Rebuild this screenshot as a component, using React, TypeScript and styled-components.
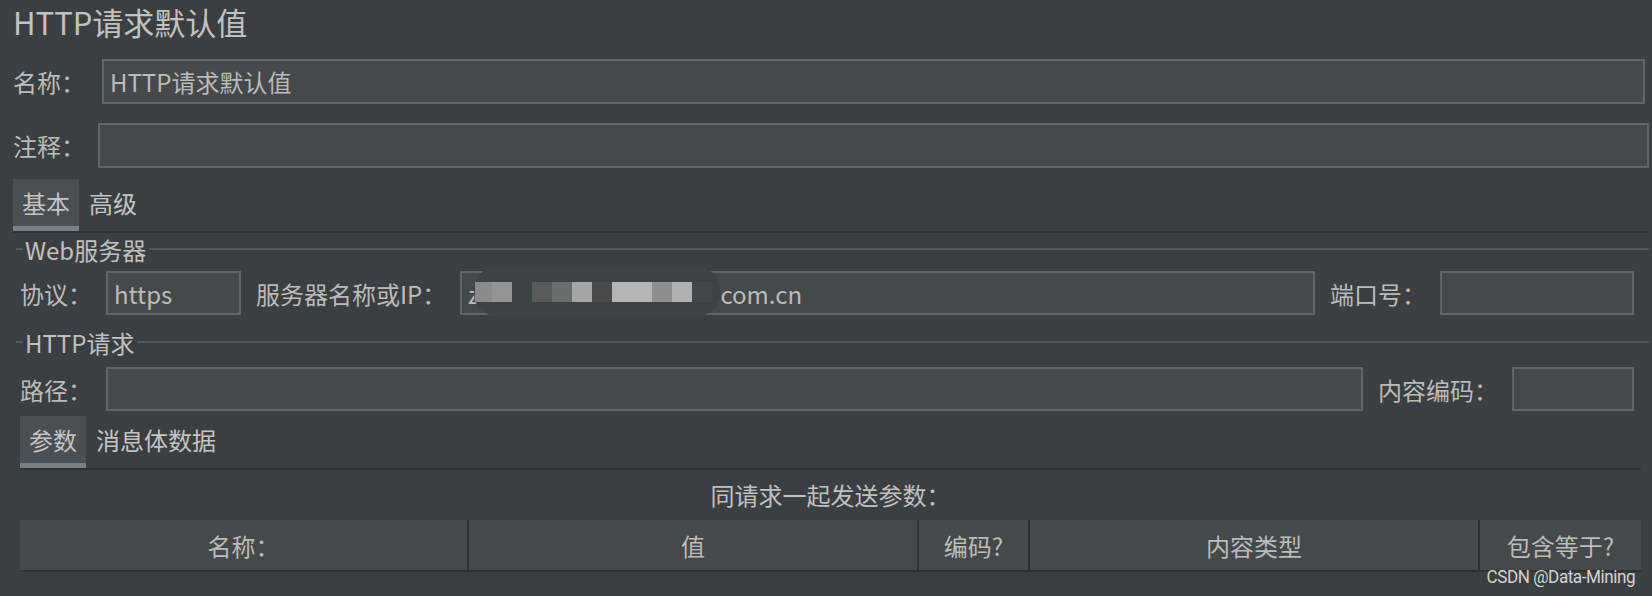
import React from 'react';
import styled, { createGlobalStyle } from 'styled-components';

const GlobalStyle = createGlobalStyle`
  html, body {
    margin: 0;
    padding: 0;
    background: #3c3f41;
  }
  body {
    font-family: "Noto Sans CJK SC", "Noto Sans", sans-serif;
    color: #bbbbbb;
  }
`;

const Page = styled.div`
  position: relative;
  width: 1652px;
  height: 596px;
  overflow: hidden;
  background: #3c3f41;
  box-sizing: border-box;
  padding-left: 13px;
`;

const Title = styled.div`
  box-sizing: border-box;
  height: 41px;
  padding-top: 3px;
  line-height: 38px;
  font-size: 31px;
  color: #c2c2c2;
  white-space: nowrap;
`;

const Row = styled.div<{ $top?: number; $right: number; $left?: number }>`
  display: flex;
  align-items: center;
  margin-top: ${p => p.$top ?? 0}px;
  margin-right: ${p => p.$right}px;
  margin-left: ${p => p.$left ?? 0}px;
`;

const Label = styled.div<{ $w: number; $gap?: number }>`
  box-sizing: border-box;
  flex: 0 0 ${p => p.$w}px;
  padding-left: ${p => p.$gap ?? 0}px;
  font-size: 24px;
  white-space: nowrap;
  color: #bbbbbb;
`;

const Field = styled.div<{ $w?: number; $h?: number }>`
  position: relative;
  box-sizing: border-box;
  ${p => (p.$w ? `flex: 0 0 ${p.$w}px;` : 'flex: 1;')}
  height: ${p => p.$h ?? 44}px;
  background: #45494a;
  border: 2px solid #646464;
  display: flex;
  align-items: center;
  padding-left: 6px;
  font-size: 24px;
  color: #bbbbbb;
  white-space: nowrap;
`;

const TabBar = styled.div<{ $top: number; $right: number; $left?: number }>`
  display: flex;
  margin-top: ${p => p.$top}px;
  margin-right: ${p => p.$right}px;
  margin-left: ${p => p.$left ?? 0}px;
  border-bottom: 2px solid #2f3133;
`;

const Tab = styled.div<{ $active?: boolean }>`
  box-sizing: border-box;
  height: 52px;
  padding: 0 9px 0 ${p => (p.$active ? 9 : 10)}px;
  display: flex;
  align-items: center;
  font-size: 24px;
  color: #c4c4c4;
  background: ${p => (p.$active ? '#4b4f52' : 'transparent')};
  border-bottom: 5px solid ${p => (p.$active ? '#7a7f87' : 'transparent')};
`;

const Legend = styled.div<{ $top: number }>`
  display: flex;
  align-items: center;
  margin-top: ${p => p.$top}px;
  margin-left: 3px;
  margin-right: 3px;
  height: 26px;
  font-size: 24px;
  color: #c0c0c0;

  &::before {
    content: '';
    width: 7px;
    height: 2px;
    background: #54575a;
  }
  &::after {
    content: '';
    flex: 1;
    height: 2px;
    background: #54575a;
  }
`;

const LegendText = styled.span`
  padding: 0 3px 0 2px;
`;

const Mosaic = styled.div`
  position: absolute;
  left: 12px;
  top: -6px;
  width: 246px;
  height: 49px;
  border-radius: 22px;
  background: #3f4243;
  display: flex;
  align-items: center;
  padding-left: 1px;
  box-sizing: border-box;
`;

const Cell = styled.span<{ $c: string; $w?: number }>`
  width: ${p => p.$w ?? 20}px;
  height: 20px;
  background: ${p => p.$c};
`;

const Spacer = styled.span`
  display: inline-block;
  width: 241px;
`;

const Caption = styled.div`
  margin: 9px 11px 0 7px;
  height: 30px;
  display: flex;
  align-items: center;
  justify-content: center;
  font-size: 24px;
  color: #c0c0c0;
`;

const Table = styled.div`
  display: grid;
  grid-template-columns: 449px 450px 111px 450px 1fr;
  margin: 11px 11px 0 7px;
  height: 52px;
  box-sizing: border-box;
  border-bottom: 2px solid #2f3133;
`;

const HeadCell = styled.div<{ $last?: boolean }>`
  display: flex;
  align-items: center;
  justify-content: center;
  background: #45494a;
  font-size: 24px;
  color: #bbbbbb;
  border-right: ${p => (p.$last ? 'none' : '2px solid #2f3133')};
`;

const Watermark = styled.div`
  position: absolute;
  right: 17px;
  bottom: 8px;
  font-family: Roboto, "Liberation Sans", sans-serif;
  font-size: 19px;
  letter-spacing: -0.5px;
  color: #d2d2d2;
  transform: scaleX(0.9);
  transform-origin: right center;
`;

const mosaicCells: [string, number][] = [
  ['#8a8a8a', 17], ['#949494', 20], ['#3f4243', 20], ['#5a5a5a', 20], ['#6b6d6d', 20],
  ['#a5a5a5', 20], ['#4a4a4a', 20], ['#b4b4b4', 40], ['#8e8e8e', 20], ['#b0b0b0', 20],
  ['#444748', 20],
];

export default function App() {
  return (
    <>
      <GlobalStyle />
      <Page>
        <Title>HTTP请求默认值</Title>

        <Row $top={18} $right={7}>
          <Label $w={89}>名称：</Label>
          <Field $h={45}>HTTP请求默认值</Field>
        </Row>

        <Row $top={19} $right={3}>
          <Label $w={85}>注释：</Label>
          <Field $h={45} />
        </Row>

        <TabBar $top={11} $right={3}>
          <Tab $active>基本</Tab>
          <Tab>高级</Tab>
        </TabBar>

        <Legend $top={3}>
          <LegendText>Web服务器</LegendText>
        </Legend>

        <Row $top={9} $right={18} $left={7}>
          <Label $w={86}>协议：</Label>
          <Field $w={135}>https</Field>
          <Label $w={219} $gap={15}>服务器名称或IP：</Label>
          <Field>
            z<Spacer />com.cn
            <Mosaic>
              {mosaicCells.map(([c, w], i) => (
                <Cell key={i} $c={c} $w={w} />
              ))}
            </Mosaic>
          </Field>
          <Label $w={125} $gap={15}>端口号：</Label>
          <Field $w={194} />
        </Row>

        <Legend $top={14}>
          <LegendText>HTTP请求</LegendText>
        </Legend>

        <Row $top={12} $right={18} $left={7}>
          <Label $w={86}>路径：</Label>
          <Field />
          <Label $w={149} $gap={15}>内容编码：</Label>
          <Field $w={122} />
        </Row>

        <TabBar $top={5} $right={11} $left={7}>
          <Tab $active>参数</Tab>
          <Tab>消息体数据</Tab>
        </TabBar>

        <Caption>同请求一起发送参数：</Caption>

        <Table>
          <HeadCell>名称：</HeadCell>
          <HeadCell>值</HeadCell>
          <HeadCell>编码?</HeadCell>
          <HeadCell>内容类型</HeadCell>
          <HeadCell $last>包含等于?</HeadCell>
        </Table>

        <Watermark>CSDN @Data-Mining</Watermark>
      </Page>
    </>
  );
}
